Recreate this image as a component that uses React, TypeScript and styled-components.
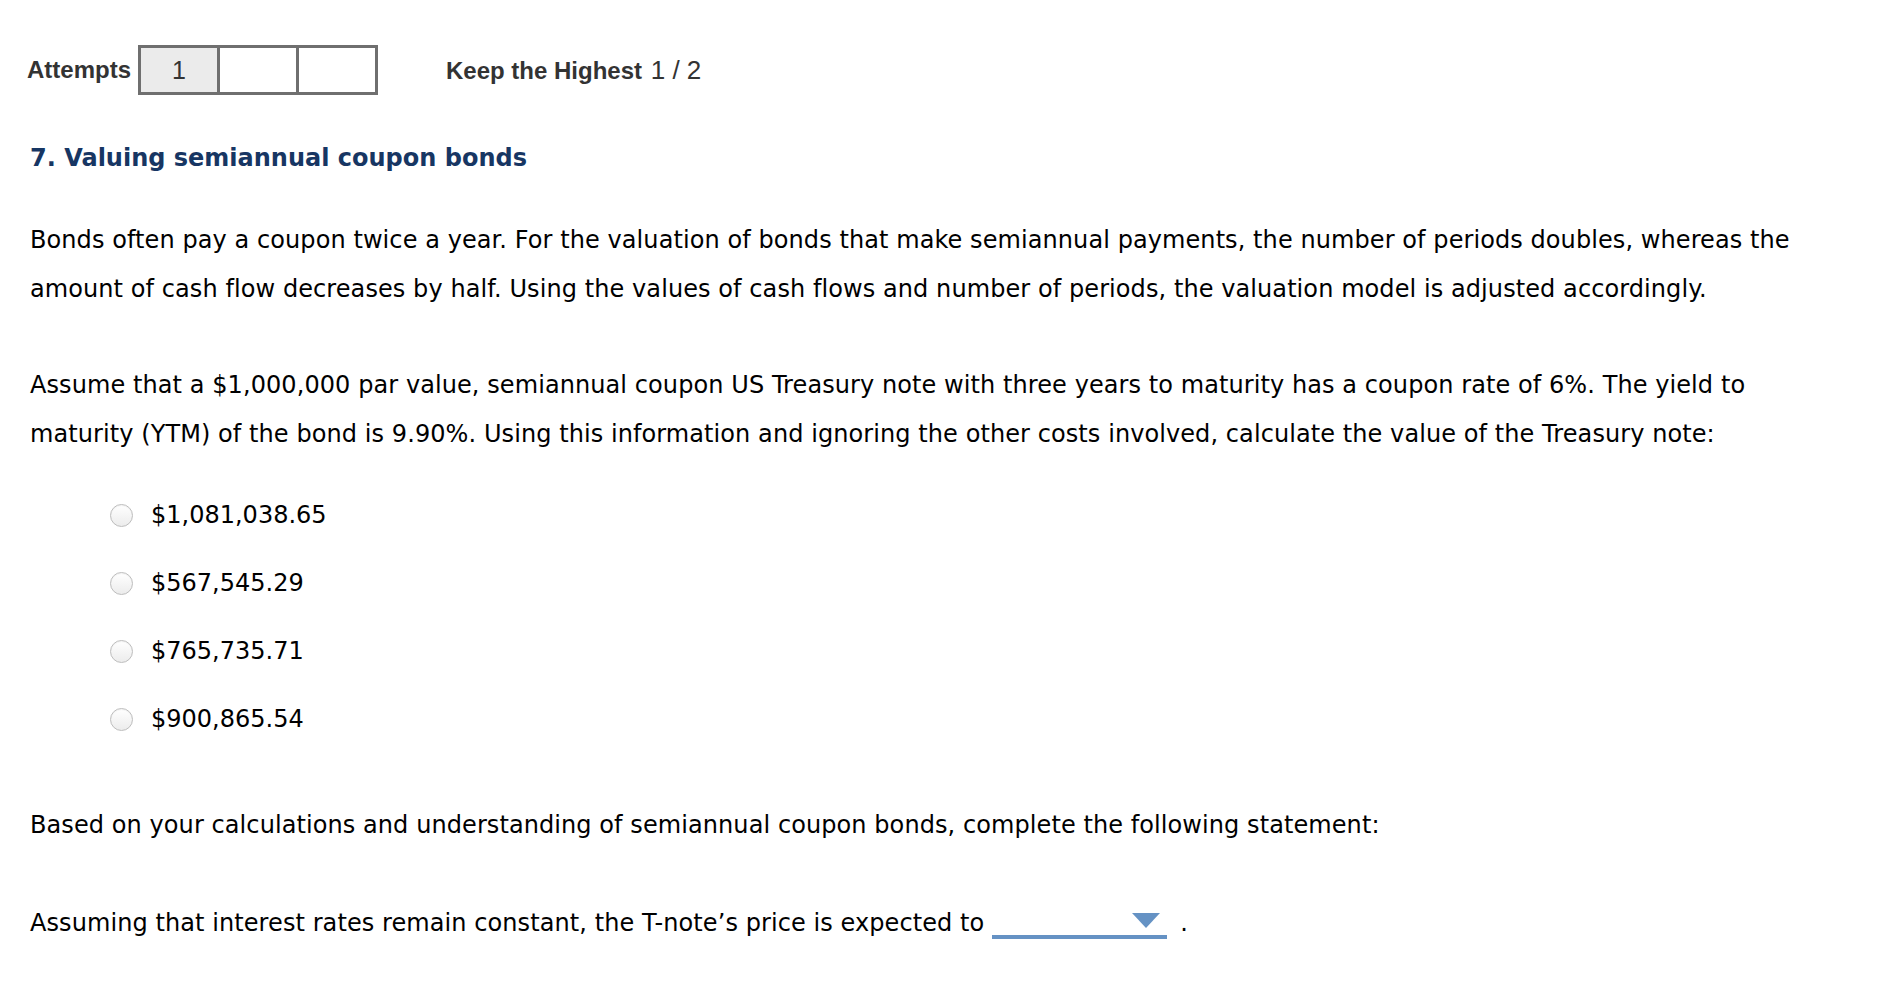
import React from 'react'
import styled, { createGlobalStyle } from 'styled-components'

const GlobalStyle = createGlobalStyle`
  body {
    margin: 0;
    background: #fff;
    font-family: "DejaVu Sans", Verdana, sans-serif;
    color: #000;
  }
`

const Page = styled.div`
  padding: 45px 0 40px 27px;
`

const AttemptsBar = styled.div`
  display: flex;
  align-items: center;
  height: 50px;
  font-family: "Liberation Sans", Arial, sans-serif;
  font-size: 24px;
  color: #333;
`

const Label = styled.span`
  font-weight: bold;
  margin-right: 7px;
`

const Cells = styled.div`
  display: flex;
  border: 3px solid #6f6f6f;
  height: 50px;
  box-sizing: border-box;
`

const Cell = styled.div<{ $used?: boolean }>`
  width: 76px;
  display: flex;
  align-items: center;
  justify-content: center;
  background: ${(p) => (p.$used ? '#ebebeb' : '#fff')};
  font-size: 25px;
  color: #333;
  & + & {
    border-left: 3px solid #6f6f6f;
  }
`

const Keep = styled.div`
  margin-left: 68px;
  b {
    font-weight: bold;
  }
  span {
    font-size: 26px;
    margin-left: 2px;
  }
`

const Title = styled.h2`
  margin: 48px 0 0 3px;
  font-size: 24px;
  line-height: 30px;
  font-weight: bold;
  color: #173663;
`

const Para = styled.p<{ $gap: number }>`
  margin: ${(p) => p.$gap}px 0 0 3px;
  font-size: 24px;
  line-height: 49px;
  letter-spacing: 0.08px;
  max-width: 1815px;
`

const Options = styled.div`
  margin: 22px 0 0 83px;
  display: flex;
  flex-direction: column;
`

const Option = styled.label`
  display: flex;
  align-items: center;
  height: 68px;
  font-size: 24px;
  gap: 18px;
  cursor: pointer;
`

const Radio = styled.span`
  width: 23px;
  height: 23px;
  border-radius: 50%;
  box-sizing: border-box;
  border: 1px solid #bdbdbd;
  background: linear-gradient(#ffffff, #ececec);
  box-shadow: inset 0 1px 1px rgba(0, 0, 0, 0.05);
`

const Select = styled.span`
  display: inline-flex;
  justify-content: flex-end;
  align-items: flex-start;
  width: 175px;
  height: 34px;
  margin: 0 13px 0 8px;
  padding-right: 7px;
  box-sizing: border-box;
  border-bottom: 4px solid #6592c4;
  vertical-align: 3px;
`

const Caret = styled.span`
  width: 0;
  height: 0;
  margin-top: 8px;
  border-left: 14px solid transparent;
  border-right: 14px solid transparent;
  border-top: 15px solid #6592c4;
`

const answers = ['$1,081,038.65', '$567,545.29', '$765,735.71', '$900,865.54']

export default function App() {
  return (
    <Page>
      <GlobalStyle />
      <AttemptsBar>
        <Label>Attempts</Label>
        <Cells>
          <Cell $used>1</Cell>
          <Cell />
          <Cell />
        </Cells>
        <Keep>
          <b>Keep the Highest</b> <span>1 / 2</span>
        </Keep>
      </AttemptsBar>

      <Title>7. Valuing semiannual coupon bonds</Title>

      <Para $gap={43}>
        Bonds often pay a coupon twice a year. For the valuation of bonds that make semiannual payments, the number of
        periods doubles, whereas the amount of cash flow decreases by half. Using the values of cash flows and number of
        periods, the valuation model is adjusted accordingly.
      </Para>

      <Para $gap={47}>
        Assume that a $1,000,000 par value, semiannual coupon US Treasury note with three years to maturity has a coupon
        rate of 6%. The yield to maturity (YTM) of the bond is 9.90%. Using this information and ignoring the other costs
        involved, calculate the value of the Treasury note:
      </Para>

      <Options>
        {answers.map((a) => (
          <Option key={a}>
            <Radio />
            {a}
          </Option>
        ))}
      </Options>

      <Para $gap={48}>
        Based on your calculations and understanding of semiannual coupon bonds, complete the following statement:
      </Para>

      <Para $gap={49}>
        Assuming that interest rates remain constant, the T-note’s price is expected to
        <Select>
          <Caret />
        </Select>
        .
      </Para>
    </Page>
  )
}
